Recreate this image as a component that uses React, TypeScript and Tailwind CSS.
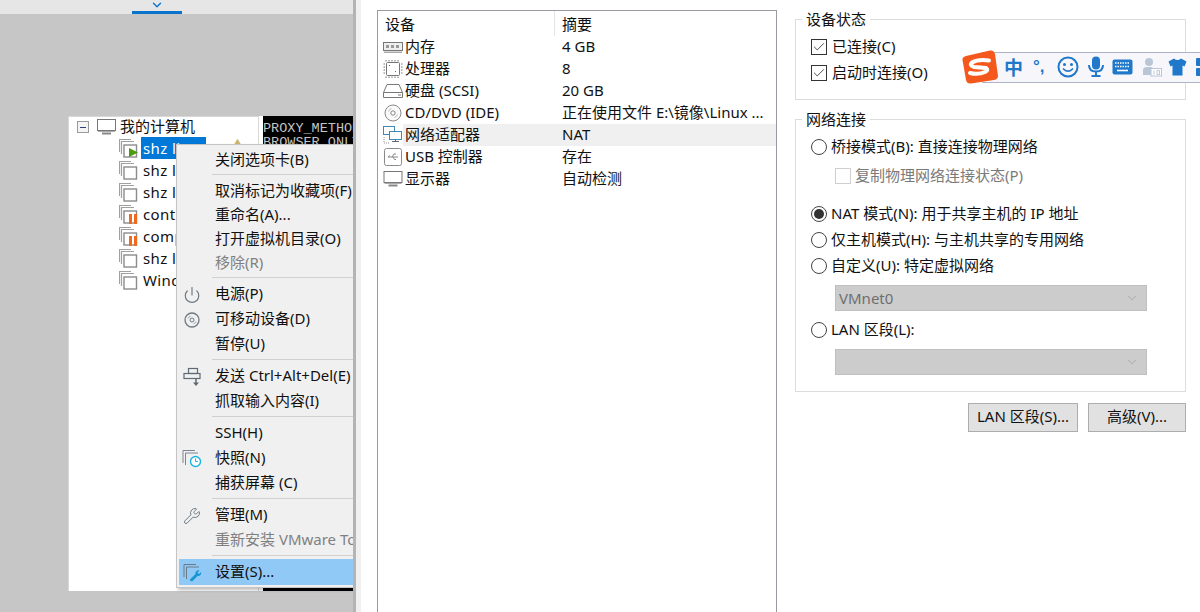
import React from 'react';
import { ChevronDown, Power, Wrench, Check } from 'lucide-react';

const FONT = "font-['Noto_Sans','Noto_Sans_CJK_SC',sans-serif]";

function VmIcon({ state }: { state?: 'run' | 'pause' }) {
  return (
    <svg width="19" height="19" viewBox="0 0 19 19" className="shrink-0">
      <path d="M0.500 13V0.500H12" fill="none" stroke="#a0a0a0" strokeWidth="1.200" />
      <path d="M2.500 15V2.500H15" fill="none" stroke="#a0a0a0" strokeWidth="1.200" />
      <rect x="5" y="6" width="12.500" height="12" fill="#fff" stroke="#8c8c8c" strokeWidth="1.400" />
      {state === 'run' && <path d="M10 9l9 4.500-9 4.500z" fill="#4c9a0e" />}
      {state === 'pause' && (
        <g fill="#ee6a1f">
          <rect x="10" y="9" width="3" height="10" />
          <rect x="15" y="9" width="3" height="10" />
        </g>
      )}
    </svg>
  );
}

function MonitorIcon({ width = 19 }: { width?: number }) {
  return (
    <svg width={width} height="16" viewBox="0 0 19 16">
      <rect x="0.500" y="0.500" width="18" height="11" fill="#fff" stroke="#777" />
      <path d="M1 12.500h17" stroke="#aaa" />
      <path d="M5 14.500h9" stroke="#888" strokeWidth="2" />
    </svg>
  );
}

const TREE: { label: string; state?: 'run' | 'pause'; selected?: boolean }[] = [
  { label: 'shz linux', state: 'run', selected: true },
  { label: 'shz linux' },
  { label: 'shz linux' },
  { label: 'controller', state: 'pause' },
  { label: 'compute', state: 'pause' },
  { label: 'shz linux' },
  { label: 'Windows' },
];

function TreePanel() {
  return (
    <div className="w-[191px] h-[475px] bg-white border-l border-t border-r border-[#d8d8d8] overflow-hidden">
      <div className="flex items-center h-5 pl-2 text-[15px] text-[#111]">
        <span className="w-3 h-3 border border-[#9a9a9a] bg-[#f4f4f4] flex items-center justify-center mr-2">
          <span className="w-[6px] h-px bg-[#2b3f7a]" />
        </span>
        <MonitorIcon />
        <span className="ml-1 leading-[17px] -mt-[2px]">我的计算机</span>
      </div>
      <div className="pl-[50px]">
        {TREE.map((item, i) => (
          <div key={i} className="flex items-center h-[22px]">
            <VmIcon state={item.state} />
            <span
              className={`ml-[3px] h-[22px] leading-[22px] text-[15px] tracking-[0.4px] pl-[2px] whitespace-nowrap ${
                item.selected ? 'w-[65px] bg-[#0078d7] text-white' : 'text-[#111]'
              }`}
            >
              {item.label}
            </span>
            {item.selected && <span className="ml-[27px] -mt-[10px] text-[9px] text-[#c9b56a]">▲</span>}
          </div>
        ))}
      </div>
    </div>
  );
}

function Terminal() {
  return (
    <div className="ml-1 flex-1 h-[475px] bg-black overflow-hidden font-['Liberation_Mono',monospace] text-[13.500px] leading-[14px] text-[#c4c4c4] whitespace-nowrap">
      <div className="-mt-[11px] mb-[3px]">TYPE=Ethernet</div>
      <div>PROXY_METHOD=none</div>
      <div>BROWSER_ONLY=no</div>
    </div>
  );
}

function Sep({ h = 7 }: { h?: number }) {
  return (
    <div className={`pl-[35px] pt-[2px] ${h === 6 ? 'h-[6px]' : 'h-[7px]'}`}>
      <div className="h-px w-full bg-[#d0d0d0]" />
    </div>
  );
}

function Item({
  label,
  icon,
  tall,
  disabled,
  active,
}: {
  label: string;
  icon?: React.ReactNode;
  tall?: boolean;
  disabled?: boolean;
  active?: boolean;
}) {
  const height = active ? 'h-[26px]' : tall ? 'h-[25px]' : 'h-6';
  return (
    <div
      className={`flex items-center whitespace-nowrap text-[15px] ${height} ${
        disabled ? 'text-[#808080]' : 'text-[#111]'
      } ${active ? 'bg-[#90c8f6] ml-[2px]' : ''}`}
    >
      <span className={`flex items-center justify-center shrink-0 mr-2 ${active ? 'w-[28px]' : 'w-[30px]'}`}>{icon}</span>
      <span className={active ? '-mt-px' : '-mt-[2px]'}>{label}</span>
    </div>
  );
}

function ContextMenu() {
  return (
    <div className="absolute left-[176px] top-[144px] w-[177px] h-[444px] pt-[3px] overflow-hidden bg-[#f0f0f0] border-l border-t border-b border-[#c4c4c4] shadow-[2px_2px_3px_rgba(0,0,0,0.25)]">
      <Item label="关闭选项卡(B)" />
      <Sep />
      <Item label="取消标记为收藏项(F)" />
      <Item label="重命名(A)..." />
      <Item label="打开虚拟机目录(O)" />
      <Item label="移除(R)" disabled />
      <Sep />
      <Item
        tall
        label="电源(P)"
        icon={<Power size={18} strokeWidth={1.600} className="text-[#707a84]" />}
      />
      <Item
        tall
        label="可移动设备(D)"
        icon={
          <svg width="16" height="16" viewBox="0 0 16 16">
            <circle cx="8" cy="8" r="7" fill="none" stroke="#707a84" strokeWidth="1.300" />
            <circle cx="8" cy="8" r="2" fill="none" stroke="#707a84" />
            <path d="M4 6.500A4.500 4.500 0 0 1 6.500 4M12 9.500A4.500 4.500 0 0 1 9.500 12" fill="none" stroke="#a0a8b0" />
          </svg>
        }
      />
      <Item tall label="暂停(U)" />
      <Sep />
      <Item
        tall
        label="发送 Ctrl+Alt+Del(E)"
        icon={
          <svg width="18" height="20" viewBox="0 0 18 20">
            <g fill="none" stroke="#5f6a75" strokeWidth="1.200">
              <rect x="5.500" y="1.500" width="9" height="5" />
              <rect x="1" y="6.500" width="16" height="5" />
            </g>
            <path d="M13 12v5" stroke="#5f6a75" strokeWidth="1.500" />
            <path d="M10 15.500h6l-3 3.500z" fill="#5f6a75" />
          </svg>
        }
      />
      <Item tall label="抓取输入内容(I)" />
      <Sep />
      <Item tall label="SSH(H)" />
      <Item
        tall
        label="快照(N)"
        icon={
          <svg width="20" height="19" viewBox="0 0 20 19">
            <path d="M1 14V1.500h12M3.500 16V4H16" fill="none" stroke="#7b8690" />
            <circle cx="13.500" cy="12.500" r="5" fill="#fff" stroke="#17b5e0" strokeWidth="1.400" />
            <path d="M13.500 9.500v3h2.500" fill="none" stroke="#17b5e0" />
          </svg>
        }
      />
      <Item tall label="捕获屏幕 (C)" />
      <Sep />
      <Item
        tall
        label="管理(M)"
        icon={<Wrench size={18} strokeWidth={1.300} className="text-[#6b7680]" />}
      />
      <Item tall label="重新安装 VMware Tools(T)..." disabled />
      <Sep h={6} />
      <Item
        tall
        active
        label="设置(S)..."
        icon={
          <svg width="20" height="19" viewBox="0 0 20 19">
            <path d="M1 14V1.500h12M3.500 16V4H16" fill="none" stroke="#6d7a86" />
            <path d="M6.500 17l6-6a3 3 0 0 1 4-3.500l-2 2 1.500 1.500 2-2a3 3 0 0 1-3.500 4l-5.500 5.500z" fill="#1497d4" />
          </svg>
        }
      />
    </div>
  );
}

const DEVICES: { name: string; summary: string; icon: React.ReactNode; selected?: boolean }[] = [
  {
    name: '内存',
    summary: '4 GB',
    icon: (
      <svg width="20" height="14" viewBox="0 0 20 14">
        <rect x="0.500" y="2.500" width="19" height="8" fill="#eee" stroke="#777" />
        <path d="M3 5h3v3H3zM8 5h3v3H8zM13 5h3v3h-3z" fill="#999" />
        <path d="M1 11.500h18v1.500H1z" fill="#aaa" />
      </svg>
    ),
  },
  {
    name: '处理器',
    summary: '8',
    icon: (
      <svg width="20" height="20" viewBox="0 0 20 20">
        <rect x="3.500" y="3.500" width="13" height="13" rx="1" fill="#fff" stroke="#777" />
        <path d="M3 1v1.500M6 1v1.500M9 1v1.500M12 1v1.500M15 1v1.500M3 17.500V19M6 17.500V19M9 17.500V19M12 17.500V19M15 17.500V19M0.500 5H2M0.500 8H2M0.500 11H2M0.500 14H2M18 5h1.500M18 8h1.500M18 11h1.500M18 14h1.500" stroke="#777" />
        <path d="M6 6h1v1H6zM12 12h1v1h-1z" fill="#666" />
      </svg>
    ),
  },
  {
    name: '硬盘 (SCSI)',
    summary: '20 GB',
    icon: (
      <svg width="20" height="16" viewBox="0 0 20 16">
        <path d="M4 1.500h12l3.500 8v5h-19v-5z" fill="#fff" stroke="#777" />
        <path d="M0.500 9.500h19" stroke="#777" />
        <path d="M15 12h3" stroke="#777" />
      </svg>
    ),
  },
  {
    name: 'CD/DVD (IDE)',
    summary: '正在使用文件 E:\\镜像\\Linux ...',
    icon: (
      <svg width="18" height="18" viewBox="0 0 18 18">
        <circle cx="9" cy="9" r="8" fill="#fafafa" stroke="#8a8a8a" />
        <circle cx="9" cy="9" r="2.200" fill="none" stroke="#888" />
        <path d="M4.500 7.500A5 5 0 0 1 7.500 4.500M13.500 10.500A5 5 0 0 1 10.500 13.500" fill="none" stroke="#bbb" />
      </svg>
    ),
  },
  {
    name: '网络适配器',
    summary: 'NAT',
    selected: true,
    icon: (
      <svg width="19" height="18" viewBox="0 0 19 18">
        <rect x="0.500" y="0.500" width="11" height="8" fill="#fff" stroke="#3f88b8" />
        <rect x="6.500" y="5.500" width="12" height="8" fill="#fff" stroke="#3f88b8" />
        <path d="M12.500 13.500v2M9 15.500h7" stroke="#666" />
        <path d="M1 11v6h5" fill="none" stroke="#999" strokeDasharray="1 1" />
      </svg>
    ),
  },
  {
    name: 'USB 控制器',
    summary: '存在',
    icon: (
      <svg width="18" height="18" viewBox="0 0 18 18">
        <rect x="0.500" y="0.500" width="17" height="17" rx="2" fill="#fff" stroke="#8a8a8a" />
        <path d="M4 9h10M4 9l2-1.500M8 9l2-3h2M9 9l1.500 2.500H12" fill="none" stroke="#888" />
      </svg>
    ),
  },
  {
    name: '显示器',
    summary: '自动检测',
    icon: <MonitorIcon width={20} />,
  },
];

function DeviceTable() {
  return (
    <div className="ml-4 mt-[10px] w-[400px] h-[640px] shrink-0 border border-[#9a9aa2] text-[15px] text-[#111]">
      <div className="flex h-[25px] items-center">
        <div className="w-[177px] pl-[7px] h-full leading-[26px] border-r border-[#e5e5e5]">设备</div>
        <div className="pl-[7px] leading-[26px]">摘要</div>
      </div>
      {DEVICES.map((d) => (
        <div key={d.name} className="flex h-[22px] items-center pl-[4px]">
          <span className="w-[21px] shrink-0 flex items-center justify-center">{d.icon}</span>
          <div className={`flex flex-1 items-center h-full ${d.selected ? 'bg-[#f0f0f0]' : ''}`}>
            <span className="w-[159px] shrink-0 pl-[2px] whitespace-nowrap -mt-px">{d.name}</span>
            <span className="whitespace-nowrap -mt-px">{d.summary}</span>
          </div>
        </div>
      ))}
    </div>
  );
}

function Checkbox({ checked, disabled }: { checked?: boolean; disabled?: boolean }) {
  return (
    <span
      className={`w-4 h-4 shrink-0 border flex items-center justify-center ${
        disabled ? 'border-[#cfcfcf]' : 'border-[#333]'
      }`}
    >
      {checked && <Check size={14} strokeWidth={1.600} className="text-[#444]" />}
    </span>
  );
}

function Radio({ checked }: { checked?: boolean }) {
  return (
    <span className="w-4 h-4 shrink-0 rounded-full border border-[#444] flex items-center justify-center">
      {checked && <span className="w-[10px] h-[10px] rounded-full bg-[#333]" />}
    </span>
  );
}

function RadioRow({ label, checked, className }: { label: string; checked?: boolean; className: string }) {
  return (
    <div className={`flex items-center gap-1 h-[22px] ${className}`}>
      <Radio checked={checked} />
      <span className="-mt-px">{label}</span>
    </div>
  );
}

function DisabledSelect({ value, className }: { value?: string; className: string }) {
  return (
    <div className={`ml-[24px] w-[312px] h-[26px] flex items-center justify-between pl-[3px] pr-[7px] bg-[#cccccc] border border-[#bfbfbf] text-[#6f6f6f] ${className}`}>
      <span>{value}</span>
      <ChevronDown size={14} strokeWidth={1} className="text-[#8f8f8f]" />
    </div>
  );
}

function GroupBox({ title, className, children }: { title: string; className: string; children: React.ReactNode }) {
  return (
    <div className={`relative border border-[#dcdcdc] ${className}`}>
      <span className="absolute left-[6px] -top-[11px] px-[4px] bg-white leading-[20px]">{title}</span>
      {children}
    </div>
  );
}

function SettingsColumn() {
  return (
    <div className="ml-[18px] mt-[19px] w-[391px] shrink-0 text-[15px] text-[#111]">
      <GroupBox title="设备状态" className="h-[81px] pl-[15px] pt-4">
        <div className="flex items-center gap-[5px] h-[22px]">
          <Checkbox checked />
          <span className="-mt-px">已连接(C)</span>
        </div>
        <div className="flex items-center gap-[5px] h-[22px] mt-1">
          <Checkbox checked />
          <span className="-mt-px">启动时连接(O)</span>
        </div>
      </GroupBox>
      <GroupBox title="网络连接" className="h-[273px] mt-[19px] pl-[15px] pt-4">
        <RadioRow label="桥接模式(B): 直接连接物理网络" className="" />
        <div className="flex items-center gap-1 h-[22px] ml-[24px] mt-[7px] text-[#7a7a7a]">
          <Checkbox disabled />
          <span className="-mt-[2px]">复制物理网络连接状态(P)</span>
        </div>
        <RadioRow label="NAT 模式(N): 用于共享主机的 IP 地址" checked className="mt-[16px]" />
        <RadioRow label="仅主机模式(H): 与主机共享的专用网络" className="mt-1" />
        <RadioRow label="自定义(U): 特定虚拟网络" className="mt-1" />
        <DisabledSelect value="VMnet0" className="mt-[8px]" />
        <RadioRow label="LAN 区段(L):" className="mt-2" />
        <DisabledSelect className="mt-2" />
      </GroupBox>
      <div className="flex justify-end gap-[10px] mt-[11px]">
        <button className="w-[110px] h-[29px] pb-[3px] bg-[#e1e1e1] border border-[#adadad]">LAN 区段(S)...</button>
        <button className="w-[98px] h-[29px] pb-[3px] bg-[#e1e1e1] border border-[#adadad]">高级(V)...</button>
      </div>
    </div>
  );
}

function ImeBar() {
  return (
    <div className="absolute z-20 left-[962px] top-[49px] w-[238px] h-[35px] flex items-center overflow-hidden">
      <div className="absolute left-[20px] right-0 top-[3px] h-[31px] bg-[#f7f7fb] border-y border-[#aeb3c6]" />
      <svg width="36" height="34" viewBox="0 0 36 34" className="relative shrink-0">
        <path d="M4 6L28 0.500Q32 0 33 4L36 26Q36 29 32 30L9 33.500Q5 34 4 30L0.500 10Q0 7 4 6z" fill="#f4581c" />
        <path d="M27 10.500Q16 9 10 12.500Q7 15 12 17L24 18Q27 20 23 22Q16 25 8 23" fill="none" stroke="#fff" strokeWidth="4" strokeLinecap="round" />
      </svg>
      <div className="relative flex items-center text-[#1f78c9] ml-[6px]">
        <span className="w-[18px] text-[19px] leading-none font-bold font-['Noto_Sans_CJK_SC',sans-serif]">中</span>
        <span className="ml-[11px] w-[15px] text-[17px] font-bold leading-none font-['Liberation_Sans',sans-serif] whitespace-nowrap">°,</span>
        <svg width="22" height="22" viewBox="0 0 22 22" className="ml-[9px] shrink-0">
          <circle cx="11" cy="11" r="9.500" fill="none" stroke="currentColor" strokeWidth="2" />
          <circle cx="7.500" cy="8.500" r="1.500" fill="currentColor" />
          <circle cx="14.500" cy="8.500" r="1.500" fill="currentColor" />
          <path d="M6.500 13q4.500 4.500 9 0" fill="none" stroke="currentColor" strokeWidth="1.700" strokeLinecap="round" />
        </svg>
        <svg width="16" height="21" viewBox="0 0 16 21" className="ml-[9px] shrink-0">
          <rect x="4" y="0.500" width="8" height="13" rx="4" fill="currentColor" />
          <path d="M1 9q0 6.500 7 6.500T15 9M8 15.500V20M3.500 20h9" fill="none" stroke="currentColor" strokeWidth="2" />
        </svg>
        <svg width="21" height="16" viewBox="0 0 21 16" className="ml-[8px] shrink-0">
          <rect x="0.500" y="0.500" width="20" height="15" rx="2" fill="currentColor" />
          <path d="M3 4h15M3 7.500h15" stroke="#fff" strokeWidth="1.600" strokeDasharray="1.500 1" />
          <path d="M5 11.500h11" stroke="#fff" strokeWidth="1.600" />
        </svg>
        <svg width="20" height="20" viewBox="0 0 20 20" className="ml-[9px] shrink-0">
          <circle cx="7" cy="5" r="4" fill="#b9c6d6" />
          <path d="M1 18v-5q0-3 4-3h4q2 0 2 3v5z" fill="#b9c6d6" />
          <rect x="9" y="11.500" width="10.500" height="7.500" fill="#fff" stroke="#b9c6d6" />
          <path d="M12 13.500v4M15 13.500h2.500v4H15z" fill="none" stroke="#b9c6d6" />
        </svg>
        <svg width="19" height="18" viewBox="0 0 19 18" className="ml-[6px] shrink-0">
          <path d="M6 0.500L0.500 3.500 2.500 8.500 4.500 7.500V17.500H14.500V7.500L16.500 8.500 18.500 3.500 13 0.500Q9.500 3.500 6 0.500z" fill="currentColor" />
        </svg>
        <span className="ml-[9px] flex flex-col gap-[2px] shrink-0">
          <i className="block w-2 h-2 bg-[#1f78c9] rounded-[1px]" />
          <i className="block w-2 h-2 bg-[#1f78c9] rounded-[1px]" />
        </span>
      </div>
    </div>
  );
}

export default function App() {
  return (
    <div className={`relative flex w-[1200px] h-[612px] overflow-hidden bg-white ${FONT}`}>
      <div className="w-[353px] shrink-0 bg-[#c6c6c6]">
        <div className="relative h-[14px] bg-[#e6e6e6]">
          <div className="absolute left-[132px] bottom-0 w-[50px] h-[3px] bg-[#0a74cc]" />
          <ChevronDown size={14} strokeWidth={2.400} className="absolute left-[150px] -top-[2px] text-[#0a74cc]" />
        </div>
        <div className="flex ml-[68px] mt-[102px] bg-white">
          <TreePanel />
          <Terminal />
        </div>
      </div>
      <ContextMenu />
      <div className="relative z-10 flex flex-1 min-w-0 bg-white border-l-[3px] border-[#b4b4b4]">
        <div className="w-[5px] shrink-0 bg-[#f0f0f0]" />
        <DeviceTable />
        <SettingsColumn />
      </div>
      <ImeBar />
    </div>
  );
}
